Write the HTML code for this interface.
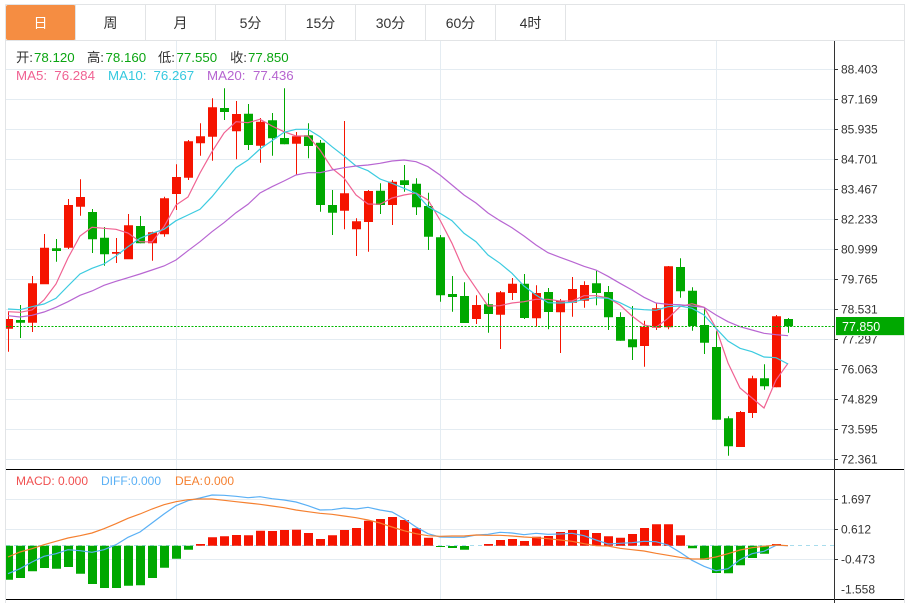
<!DOCTYPE html>
<html><head><meta charset="utf-8"><style>
html,body{margin:0;padding:0;background:#fff;width:911px;height:603px;overflow:hidden}
svg{display:block}
text{font-family:"Liberation Sans","Noto Sans CJK SC",sans-serif}
.t{font-size:14px;fill:#333;text-anchor:middle}
.a{font-size:12px;fill:#333}
.i{font-size:13.3px}
.m{font-size:12px}
.g{fill:#0ba512}
path{fill:none}
</style></head><body>
<svg width="911" height="603" viewBox="0 0 911 603" xmlns="http://www.w3.org/2000/svg">
<defs><clipPath id="c"><rect x="6" y="41" width="828" height="562"/></clipPath></defs>
<rect x="6" y="5" width="69.5" height="35" rx="2" fill="#f58d42"/>
<path stroke="#e2e4e6" d="M5.5 4.5H904.5V603M5.5 4.5V603M5.5 40.5H904.5M75.5 5V40M145.5 5V40M215.5 5V40M285.5 5V40M355.5 5V40M425.5 5V40M495.5 5V40M565.5 5V40"/>
<text class="t" x="40.5" y="28" style="fill:#fff">日</text>
<text class="t" x="110.5" y="28">周</text>
<text class="t" x="180.5" y="28">月</text>
<text class="t" x="250.5" y="28">5分</text>
<text class="t" x="320.5" y="28">15分</text>
<text class="t" x="390.5" y="28">30分</text>
<text class="t" x="460.5" y="28">60分</text>
<text class="t" x="530.5" y="28">4时</text>

<path stroke="#e4ecf2" d="M6 69.5H834M6 99.5H834M6 129.5H834M6 159.5H834M6 189.5H834M6 219.5H834M6 249.5H834M6 279.5H834M6 309.5H834M6 339.5H834M6 369.5H834M6 399.5H834M6 429.5H834M6 459.5H834M6 499.5H834M6 529.5H834M6 559.5H834M176.5 41V600M440.5 41V600M716.5 41V600"/>

<g clip-path="url(#c)">
<path stroke="#f51400" stroke-width="1" d="M8.5 311V351.7M32.5 276V332M44.5 234V284M68.5 199V249M80.5 179.3V215.7M116.5 238V263M128.5 214V259M152.5 231.7V260.7M164.5 196.7V236.7M176.5 164.3V210M188.5 140V180M200.5 123.3V155.7M212.5 98.3V160.7M236.5 101V159.3M260.5 118V162.7M296.5 132V175M344.5 121V229.3M356.5 218.3V256M368.5 190V251.7M392.5 180V225M476.5 295.3V324M500.5 291V349M512.5 278V300M536.5 285.3V326.7M560.5 299V353M572.5 277V316.7M584.5 281.3V307.7M644.5 320.7V366.7M656.5 303.3V330M668.5 266V329.3M740.5 411V447M752.5 375.7V418M776.5 315V387.3"/>
<path stroke="#f51400" stroke-width="9" d="M8.5 319V328.7M32.5 283.3V322.7M44.5 247.7V284.3M68.5 205V247.7M80.5 197V206.7M116.5 252V253.7M128.5 225.3V259.3M152.5 232.3V243.3M164.5 198.3V234.3M176.5 177V194M188.5 141.3V177.7M200.5 136.3V143.3M212.5 107.3V136.7M236.5 114V131.3M260.5 121.7V145.7M296.5 136.3V143.7M344.5 193.3V210.7M356.5 221.3V229.3M368.5 191V222M392.5 181.7V205M476.5 305V319M500.5 292.3V314.7M512.5 283.7V293M536.5 293V318.3M560.5 301V312.3M572.5 289V302.7M584.5 285V300.7M644.5 326.7V346M656.5 308.3V327.7M668.5 266.3V327.3M740.5 412V447M752.5 378.3V413M776.5 316.3V387.3"/>
<path stroke="#00a800" stroke-width="1" d="M20.5 305V338M56.5 239V261.7M92.5 209V253M104.5 227V265.7M140.5 216V243.3M224.5 88.3V120M248.5 104V150M272.5 113V155.7M284.5 88.3V144.3M308.5 123.3V158.3M320.5 140V211.7M332.5 190V235M380.5 183.3V214M404.5 165V191.7M416.5 178.3V215M428.5 192.7V250M440.5 235V301.7M452.5 276V311.7M464.5 282.3V323M488.5 293.3V332.7M524.5 274V319M548.5 288V329.3M596.5 270.7V305.3M608.5 286V330M620.5 312.3V340.7M632.5 306V360M680.5 258.3V297.7M692.5 287.3V330.7M704.5 307V354M716.5 331V419.7M728.5 416.3V455.7M764.5 364.3V389.7M788.5 318V332.7"/>
<path stroke="#00a800" stroke-width="9" d="M20.5 320V322.7M56.5 248.3V251M92.5 212V239.3M104.5 237.7V254.3M140.5 226V243.3M224.5 108V112M248.5 113.7V145M272.5 120.3V138.3M284.5 138V144.3M308.5 135.3V146M320.5 142.7V205M332.5 205V212.7M380.5 190.7V205M404.5 180.3V185M416.5 183.7V207.3M428.5 206V236.7M440.5 237.3V295.3M452.5 294V297M464.5 296V323M488.5 304.3V314M524.5 283.7V318M548.5 292V312M596.5 283.3V293M608.5 292V317.3M620.5 317V340.7M632.5 339.3V347.3M680.5 267V291.3M692.5 290.7V326M704.5 325V342.7M716.5 347V419.7M728.5 418.3V446.3M764.5 378.3V386.3M788.5 319V326.3"/>

<path stroke="#f06292" stroke-width="1.2" d="M8 311.7L20 312.3L32 310L44 300L56 284L68 258L80 236L92 227.3L104 228.3L116 229.3L128 233L140 241.7L152 242L164 226.7L176 205L188 197L200 173L212 151.7L224 133L236 121.7L248 122.7L260 119.3L272 126L284 131.7L296 136L308 136L320 150L332 168.3L344 178L356 195L368 204L380 204.3L392 198L404 195L416 193L428 200L440 220L452 243.3L464 270.7L476 288.3L488 306L500 305.7L512 303L524 301.7L536 299.3L548 299.3L560 301L572 301L584 295.7L596 295.7L608 298L620 305L632 316L644 325L656 327.3L668 318.3L680 306.7L692 303.7L704 307.3L716 328L728 363L740 388L752 398L764 408L776 380L788 363.3"/>
<path stroke="#3ccbe0" stroke-width="1.2" d="M8 309L20 309.7L32 306.7L44 304L56 298.3L68 286L80 274L92 268.3L104 264L116 256L128 246.7L140 238.3L152 233.3L164 229.3L176 220.7L188 215L200 209.3L212 196.7L224 182L236 167.7L248 160L260 149L272 140.7L284 132.3L296 129.3L308 129.3L320 136.7L332 146.7L344 156L356 166L368 170.7L380 179L392 183.3L404 188.3L416 193.3L428 206.7L440 213.3L452 220.7L464 233.3L476 241.7L488 255L500 263.3L512 273.3L524 286L536 295L548 302.7L560 303L572 302.3L584 299.3L596 297.7L608 298.3L620 302.7L632 308.7L644 309.7L656 310.3L668 306.7L680 306L692 308.3L704 315L716 328.3L728 341L740 348.3L752 351.7L764 357L776 357.7L788 364"/>
<path stroke="#b866d2" stroke-width="1.2" d="M8 315.7L20 317L32 315.3L44 312L56 307.3L68 301.7L80 295.3L92 291L104 285.3L116 281.3L128 277.7L140 274L152 270L164 266L176 260L188 250.7L200 241.7L212 231.7L224 222.7L236 212.7L248 204.3L260 193L272 186.7L284 181L296 175L308 172.7L320 172.7L332 170L344 167.7L356 166L368 165L380 163.3L392 161L404 160L416 161.7L428 166.7L440 175L452 185L464 195L476 203L488 213L500 220.7L512 227.7L524 236L536 245L548 252.7L560 257.3L572 261.7L584 266.3L596 270L608 276.3L620 283.3L632 290L644 297.3L656 303L668 304.3L680 304.7L692 306L704 307.3L716 315L728 321.7L740 326.7L752 330L764 333.3L776 334.7L788 335.7"/>

<path stroke="#00b800" stroke-dasharray="2 1.5" d="M6 326.5H834"/>
<path stroke="#a8dcec" stroke-dasharray="4 4" d="M6 545.5H834"/>

<path stroke="#f51400" stroke-width="9" d="M200.5 544V545.7M212.5 537.3V545.7M224.5 536.3V545.7M236.5 535V545.7M248.5 535.3V545.7M260.5 530.7V545.7M272.5 531V545.7M284.5 530V545.7M296.5 529.7V545.7M308.5 533V545.7M320.5 539V545.7M332.5 535.3V545.7M344.5 530V545.7M356.5 528V545.7M368.5 520.7V545.7M380.5 519V545.7M392.5 517V545.7M404.5 520V545.7M416.5 528.3V545.7M428.5 537.7V545.7M488.5 544V545.7M500.5 540V545.7M512.5 539V545.7M524.5 541V545.7M536.5 536.7V545.7M548.5 536V545.7M560.5 532V545.7M572.5 530V545.7M584.5 530V545.7M596.5 533V545.7M608.5 536.3V545.7M620.5 537.7V545.7M632.5 534V545.7M644.5 528V545.7M656.5 524.3V545.7M668.5 524.3V545.7M680.5 535.3V545.7M776.5 544V545.7"/>
<path stroke="#00a800" stroke-width="9" d="M8.5 545.7V579.7M20.5 545.7V578M32.5 545.7V571.3M44.5 545.7V568M56.5 545.7V568.7M68.5 545.7V567M80.5 545.7V573.7M92.5 545.7V584M104.5 545.7V588M116.5 545.7V588M128.5 545.7V585.7M140.5 545.7V585.3M152.5 545.7V578M164.5 545.7V567.7M176.5 545.7V558.7M188.5 545.7V549.7M440.5 546V547M452.5 546V548M464.5 546V549.7M692.5 545.7V548.3M704.5 545.7V559.7M716.5 545.7V573M728.5 545.7V573.3M740.5 545.7V565.3M752.5 545.7V558M764.5 545.7V553.7"/>

<path stroke="#5ab0f5" stroke-width="1.2" d="M8 573.7L20 568.7L32 562L44 556.3L56 553.7L68 549.7L80 550.7L92 552.3L104 549.7L116 544.7L128 537.3L140 532L152 523L164 514L176 505.7L188 500.7L200 498L212 495L224 495.3L236 496.3L248 497.7L260 496.7L272 498.7L284 500L296 502L308 505.7L320 510L332 509.7L344 508L356 509L368 507.3L380 510L392 512L404 518.7L416 527L428 533.7L440 537L452 537.3L464 537.3L476 535L488 534.3L500 532.3L512 533L524 534.7L536 533.3L548 534.3L560 534L572 533.3L584 535.7L596 540L608 544L620 543.3L632 542.7L644 541.3L656 541.7L668 545L680 552.3L692 560.3L704 566.3L716 570.7L728 568.7L740 559.7L752 553.7L764 551.3L776 545.3L788 545.7"/>
<path stroke="#f58030" stroke-width="1.2" d="M8 557L20 552L32 548.7L44 544.7L56 541.3L68 538L80 535.7L92 533L104 528.7L116 523.7L128 518.3L140 514L152 509L164 504.7L176 501.7L188 499.7L200 499L212 499L224 500.3L236 501.7L248 503L260 504.3L272 506L284 507.7L296 510L308 511.7L320 513.3L332 514.3L344 516L356 517.7L368 520L380 523L392 527L404 530.7L416 533.7L428 535.7L440 536.3L452 536L464 536L476 535L488 535.3L500 535.3L512 536L524 537L536 537.7L548 538.7L560 540L572 541.3L584 543.7L596 545.7L608 546L620 548.3L632 549.7L644 551L656 553.3L668 555.3L680 557.3L692 559L704 559L716 557L728 553.7L740 550L752 547.7L764 546.3L776 545L788 545.7"/>
</g>

<path stroke="#000" d="M6 469.5H904M6 599.5H904"/>
<path stroke="#333" d="M834.5 41V603M834 69.5H838M834 99.5H838M834 129.5H838M834 159.5H838M834 189.5H838M834 219.5H838M834 249.5H838M834 279.5H838M834 309.5H838M834 339.5H838M834 369.5H838M834 399.5H838M834 429.5H838M834 459.5H838M834 499.5H838M834 529.5H838M834 559.5H838"/>

<g class="a">
<text class="a" x="841" y="73.5">88.403</text>
<text class="a" x="841" y="103.5">87.169</text>
<text class="a" x="841" y="133.5">85.935</text>
<text class="a" x="841" y="163.5">84.701</text>
<text class="a" x="841" y="193.5">83.467</text>
<text class="a" x="841" y="223.5">82.233</text>
<text class="a" x="841" y="253.5">80.999</text>
<text class="a" x="841" y="283.5">79.765</text>
<text class="a" x="841" y="313.5">78.531</text>
<text class="a" x="841" y="343.5">77.297</text>
<text class="a" x="841" y="373.5">76.063</text>
<text class="a" x="841" y="403.5">74.829</text>
<text class="a" x="841" y="433.5">73.595</text>
<text class="a" x="841" y="463.5">72.361</text>
<text class="a" x="841" y="503.5">1.697</text>
<text class="a" x="841" y="533.5">0.612</text>
<text class="a" x="841" y="563.5">-0.473</text>
<text class="a" x="841" y="593.5">-1.558</text>
</g>
<rect x="836" y="317" width="68" height="18" fill="#00a800"/>
<path stroke="#d8f0d8" d="M836 335.5H904"/>
<text x="842" y="331" style="font-size:12.5px;fill:#fff">77.850</text>

<text class="i" x="16" y="62" style="fill:#333">开:</text><text class="i g" x="34" y="62">78.120</text>
<text class="i" x="87" y="62" style="fill:#333">高:</text><text class="i g" x="105.5" y="62">78.160</text>
<text class="i" x="158" y="62" style="fill:#333">低:</text><text class="i g" x="176.5" y="62">77.550</text>
<text class="i" x="230" y="62" style="fill:#333">收:</text><text class="i g" x="248" y="62">77.850</text>
<text class="i" x="16" y="80" style="fill:#f06292">MA5:</text><text class="i" x="54.3" y="80" style="fill:#f06292">76.284</text>
<text class="i" x="108" y="80" style="fill:#35c9df">MA10:</text><text class="i" x="153.5" y="80" style="fill:#35c9df">76.267</text>
<text class="i" x="207" y="80" style="fill:#b665d0">MA20:</text><text class="i" x="253" y="80" style="fill:#b665d0">77.436</text>

<text class="m" x="16" y="485" style="fill:#f05050">MACD:</text><text class="m" x="58" y="485" style="fill:#f05050">0.000</text>
<text class="m" x="101" y="485" style="fill:#5ab0f5">DIFF:</text><text class="m" x="131" y="485" style="fill:#5ab0f5">0.000</text>
<text class="m" x="175" y="485" style="fill:#f58030">DEA:</text><text class="m" x="204" y="485" style="fill:#f58030">0.000</text>
</svg>
</body></html>
